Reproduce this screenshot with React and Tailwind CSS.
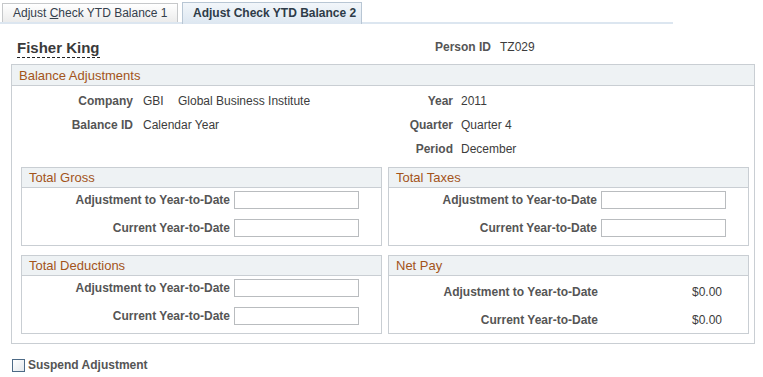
function Label({ children, className = "" }) {
  return <span className={`font-bold text-[#555] ${className}`}>{children}</span>;
}

function Field() {
  return <div className="w-[125px] h-[18px] border border-[#b9bcbf] bg-white" />;
}

function GroupBox({ title, children }) {
  return (
    <div className="h-[79px] border border-[#c9ced3] flex flex-col">
      <div className="h-[20px] bg-[#eef2f4] border-b border-[#c9ced3] pl-[7px] text-[13px] leading-[20px] text-[#a3541a]">
        {title}
      </div>
      {children}
    </div>
  );
}

function InputRows() {
  return (
    <div className="pt-[3px] flex flex-col gap-[10px]">
      {["Adjustment to Year-to-Date", "Current Year-to-Date"].map((t) => (
        <div key={t} className="flex items-center h-[18px]">
          <Label className="w-[208px] text-right">{t}</Label>
          <div className="ml-[4px]">
            <Field />
          </div>
        </div>
      ))}
    </div>
  );
}

export default function App() {
  return (
    <div
      className="w-[763px] h-[377px] bg-white text-[12px] text-[#3c3c3c] overflow-hidden"
      style={{ fontFamily: '"Liberation Sans", Arial, sans-serif' }}
    >
      {/* Tabs */}
      <div className="w-[673px] h-[24px] border-b-2 border-[#dce6f0] flex items-end pl-[2px] gap-[4px]">
        <div className="w-[176px] h-[19px] border border-b-0 border-[#c6c8ca] bg-gradient-to-b from-white to-[#ececec] pl-[10px] leading-[18px] text-[#34404c]">
          Adjust <span className="underline">C</span>heck YTD Balance 1
        </div>
        <div className="w-[180px] h-[22px] -mb-[2px] border border-b-0 border-[#b8c6d4] bg-gradient-to-b from-[#f2f6fa] to-[#dde7f1] pl-[10px] leading-[21px] font-bold text-[#2e3b48]">
          Adjust Check YTD Balance 2
        </div>
      </div>

      {/* Name row */}
      <div className="h-[40px] flex">
        <div className="w-[435px] pl-[17px] pt-[15px]">
          <span className="inline-block font-bold text-[15px] leading-[18px] text-[#3a3a3a] border-b border-dashed border-[#222]">
            Fisher King
          </span>
        </div>
        <div className="pt-[14px] flex gap-[9px]">
          <Label>Person ID</Label>
          <span>TZ029</span>
        </div>
      </div>

      {/* Balance Adjustments */}
      <div className="ml-[11px] w-[744px] border border-[#c9ced3]">
        <div className="h-[21px] bg-[#eef2f4] border-b border-[#c9ced3] pl-[7px] text-[13px] leading-[21px] text-[#a3541a]">
          Balance Adjustments
        </div>

        <div className="pt-[3px] flex">
          <div className="w-[368px] grid grid-cols-[121px_auto] gap-x-[10px] auto-rows-[24px] items-center">
            <Label className="text-right">Company</Label>
            <div className="flex">
              <span className="w-[35px]">GBI</span>
              <span>Global Business Institute</span>
            </div>
            <Label className="text-right">Balance ID</Label>
            <span>Calendar Year</span>
          </div>
          <div className="grid grid-cols-[73px_auto] gap-x-[8px] auto-rows-[24px] items-center">
            <Label className="text-right">Year</Label>
            <span>2011</span>
            <Label className="text-right">Quarter</Label>
            <span>Quarter 4</span>
            <Label className="text-right">Period</Label>
            <span>December</span>
          </div>
        </div>

        <div className="mt-[6px] pl-[9px] pr-[5px] pb-[9px] grid grid-cols-[361px_361px] gap-x-[6px] gap-y-[9px]">
          <GroupBox title="Total Gross">
            <InputRows />
          </GroupBox>
          <GroupBox title="Total Taxes">
            <InputRows />
          </GroupBox>
          <GroupBox title="Total Deductions">
            <InputRows />
          </GroupBox>
          <GroupBox title="Net Pay">
            <div className="pt-[2px] flex flex-col">
              {["Adjustment to Year-to-Date", "Current Year-to-Date"].map((t) => (
                <div key={t} className="flex items-center h-[28px]">
                  <Label className="w-[209px] text-right">{t}</Label>
                  <span className="w-[124px] text-right">$0.00</span>
                </div>
              ))}
            </div>
          </GroupBox>
        </div>
      </div>

      {/* Suspend */}
      <div className="mt-[12px] pl-[12px] flex items-center gap-[3px]">
        <div className="w-[13px] h-[13px] border border-[#4d6a86] bg-gradient-to-br from-white to-[#e4e8ec]" />
        <Label>Suspend Adjustment</Label>
      </div>
    </div>
  );
}
